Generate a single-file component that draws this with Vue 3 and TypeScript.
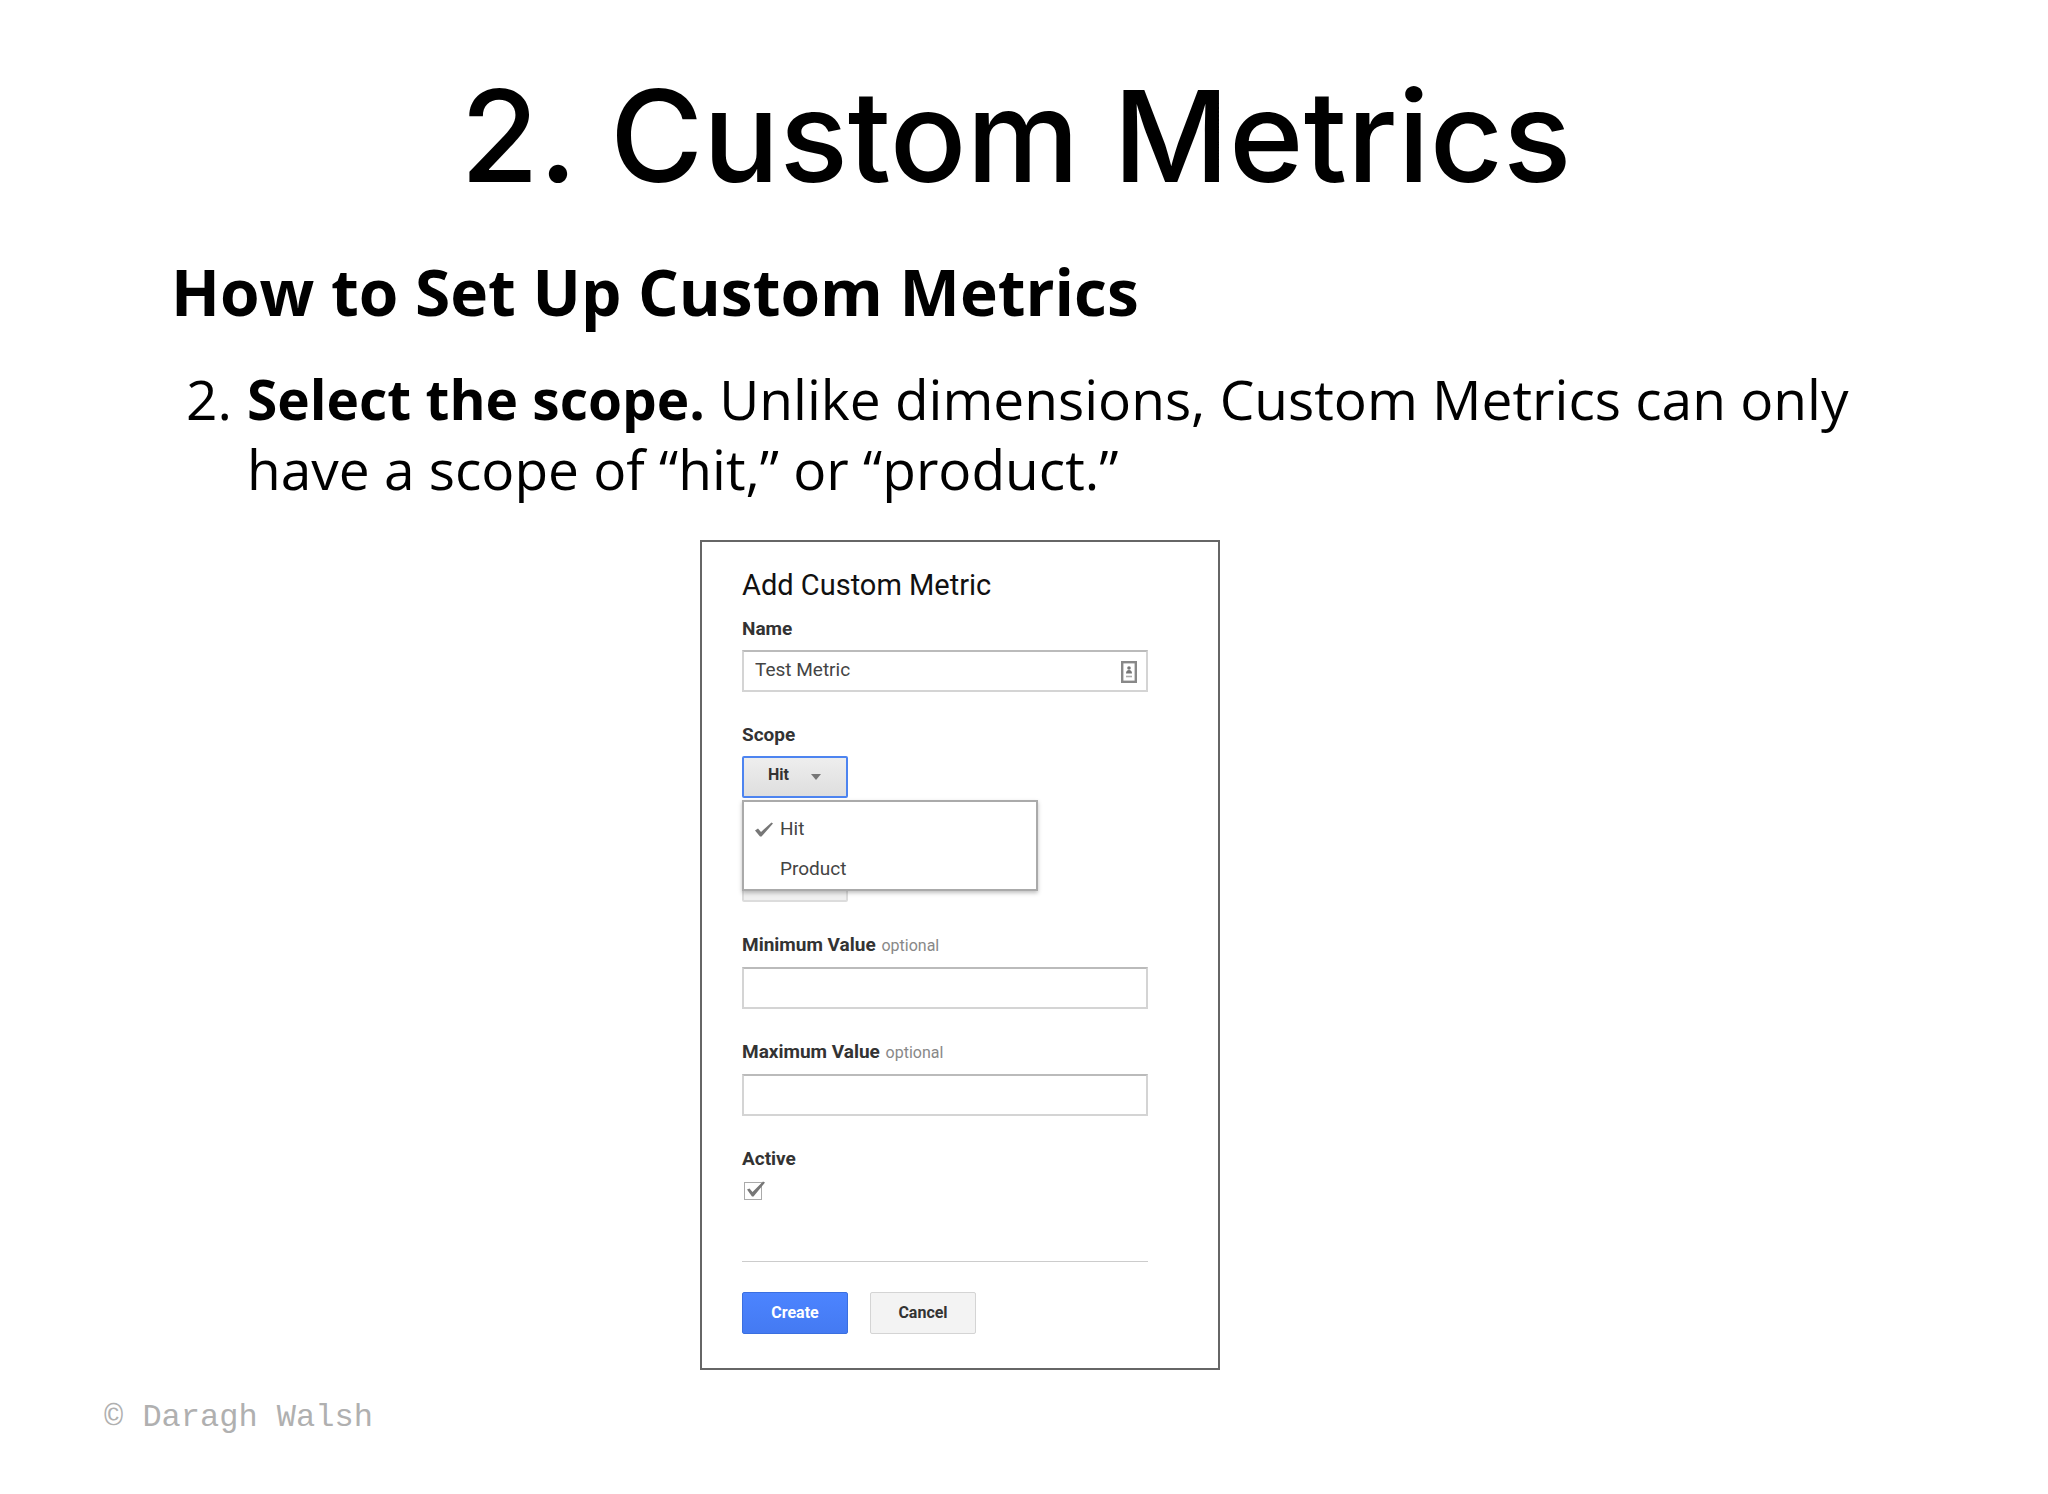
<script setup lang="ts">
import { ref } from 'vue'

const name = ref<string>('Test Metric')
const scopes: string[] = ['Hit', 'Product']
const scope = ref<string>('Hit')
const minimum = ref<string>('')
const maximum = ref<string>('')
const active = ref<boolean>(true)
</script>

<template>
  <div class="slide">
    <h1>2. Custom Metrics</h1>
    <main>
      <h2>How to Set Up Custom Metrics</h2>
      <ol start="2" class="steps">
        <li>
          <span class="number">2.</span>
          <p><strong>Select the scope.</strong> Unlike dimensions, Custom Metrics can only have a scope of “hit,” or “product.”</p>
        </li>
      </ol>
      <div class="figure">
        <form class="panel" @submit.prevent>
          <h3>Add Custom Metric</h3>

          <div class="field">
            <label for="name">Name</label>
            <div class="control">
              <input id="name" v-model="name" type="text" />
              <svg class="contact" viewBox="0 0 16 22" width="16" height="22" aria-hidden="true">
                <rect x="1.2" y="1.2" width="13.6" height="19.6" fill="#fff" stroke="#888" stroke-width="2.4" />
                <circle cx="8" cy="7" r="1.8" fill="#777" />
                <path d="M5 12.5 Q5 9 8 9 Q11 9 11 12.5 Z" fill="#777" />
                <path d="M5 15.5 H11" stroke="#aaa" stroke-width="1.6" />
              </svg>
            </div>
          </div>

          <div class="field">
            <label for="scope">Scope</label>
            <div class="control dropdown">
              <select id="scope" v-model="scope" class="focused">
                <option v-for="s in scopes" :key="s" :value="s">{{ s }}</option>
              </select>
              <svg class="arrow" viewBox="0 0 10 6" width="10" height="6" aria-hidden="true">
                <path d="M0 0 H10 L5 6 Z" fill="#777" />
              </svg>
              <ul class="menu">
                <li v-for="s in scopes" :key="s" @click="scope = s">
                  <span class="mark">
                    <svg v-if="s === scope" viewBox="0 0 18 15" width="18" height="15" aria-hidden="true">
                      <path d="M0 8.5 L3 6.5 L6 10 L16.5 0.5 L18 1.5 L6.5 14.5 H5 Z" fill="#777" />
                    </svg>
                  </span>
                  {{ s }}
                </li>
              </ul>
            </div>
          </div>

          <div class="field unlabelled">
            <select aria-label="Formatting Type"></select>
          </div>

          <div class="field">
            <label for="minimum">Minimum Value <small>optional</small></label>
            <input id="minimum" v-model="minimum" type="text" />
          </div>

          <div class="field">
            <label for="maximum">Maximum Value <small>optional</small></label>
            <input id="maximum" v-model="maximum" type="text" />
          </div>

          <div class="field">
            <label for="active">Active</label>
            <div class="control tick">
              <input id="active" v-model="active" type="checkbox" />
              <svg v-if="active" viewBox="0 0 20 20" width="20" height="20" aria-hidden="true">
                <path d="M2 8.5 L4.5 7.5 L7.5 11 L18 0.5 L20 1.5 L8.5 15.5 H7 Z" fill="#777" />
              </svg>
            </div>
          </div>

          <div class="actions">
            <button type="submit" class="primary">Create</button>
            <button type="button">Cancel</button>
          </div>
        </form>
      </div>
    </main>
    <footer>© Daragh Walsh</footer>
  </div>
</template>

<style>
body {
  margin: 0;
  background: #fff;
}
</style>

<style scoped>
* {
  box-sizing: border-box;
}

.slide {
  padding: 64px 0 40px;
  color: #000;
  font-family: 'Open Sans', sans-serif;
}

h1 {
  margin: 0 0 0 -16px;
  font: 500 127px/144px Inter, sans-serif;
  text-align: center;
}

main {
  padding: 40px 172px 0 171px;
}

h2 {
  margin: 0;
  font-size: 64px;
  line-height: 88px;
}

.steps {
  margin: 28px 0 0;
  padding: 0 0 0 15px;
  list-style: none;
}

.steps li {
  display: flex;
  font-size: 55px;
  line-height: 70px;
}

.number {
  flex: 0 0 61px;
}

.steps p {
  margin: 0;
}

.figure {
  display: flex;
  justify-content: center;
  margin-top: 36px;
  padding-right: 127px;
}

.panel {
  width: 520px;
  padding: 23px 70px 34px 40px;
  border: 2px solid #666;
  background: #fff;
  color: #333;
  font-family: Roboto, sans-serif;
  font-size: 18px;
}

h3 {
  margin: 0 0 12px;
  color: #111;
  font-size: 29px;
  font-weight: 400;
  line-height: 40px;
}

.field {
  display: flex;
  flex-direction: column;
  align-items: flex-start;
  margin-bottom: 31px;
}

.unlabelled {
  padding-top: 31px;
}

label {
  margin-bottom: 9px;
  font-size: 19px;
  font-weight: 700;
  line-height: 24px;
}

small {
  margin-left: 1px;
  color: #888;
  font-size: 16px;
  font-weight: 400;
}

.control {
  position: relative;
}

.field > .control:not(.dropdown):not(.tick) {
  width: 100%;
}

input[type='text'] {
  display: block;
  width: 100%;
  height: 42px;
  padding: 0 40px 4px 11px;
  border: 2px solid #d4d4d4;
  border-top-color: #bbb;
  background: #fff;
  color: #444;
  font: 400 19px/24px Roboto, sans-serif;
}

.contact {
  position: absolute;
  top: 11px;
  right: 11px;
}

select {
  display: block;
  width: 106px;
  height: 42px;
  padding: 0 0 4px 24px;
  appearance: none;
  border: 2px solid #dcdcdc;
  border-radius: 2px;
  background: #f0f0f0;
  color: #333;
  font: 700 16px/20px Roboto, sans-serif;
}

select.focused {
  border-color: #4d84f0;
  background: linear-gradient(#eee, #dedede);
}

.arrow {
  position: absolute;
  top: 18px;
  right: 27px;
}

.menu {
  position: absolute;
  top: 44px;
  left: 0;
  z-index: 1;
  width: 296px;
  margin: 0;
  padding: 7px 0 0;
  border: 2px solid #aaa;
  background: #fff;
  box-shadow: 0 2px 4px rgba(0, 0, 0, 0.25);
  color: #444;
  font-size: 19px;
  line-height: 40px;
  list-style: none;
}

.menu li {
  display: flex;
  align-items: center;
}

.mark {
  display: flex;
  width: 36px;
  padding-left: 11px;
}

.tick {
  padding: 2px;
}

.tick input {
  display: block;
  width: 18px;
  height: 18px;
  margin: 0;
  appearance: none;
  border: 1px solid #aaa;
  background: #fff;
}

.tick svg {
  position: absolute;
  top: 1px;
  left: 3px;
}

.actions {
  display: flex;
  gap: 22px;
  margin-top: 59px;
  padding-top: 30px;
  border-top: 1px solid #ccc;
}

button {
  width: 106px;
  height: 42px;
  padding: 0;
  border: 1px solid #d4d4d4;
  border-radius: 2px;
  background: #f3f3f3;
  color: #333;
  font: 700 16px/20px Roboto, sans-serif;
}

button.primary {
  border-color: #3a6fe0;
  background: linear-gradient(#4c84ff, #447af2);
  color: #fff;
}

footer {
  margin-top: 28px;
  padding-left: 104px;
  color: #b0b0b0;
  font: 32px/40px 'Liberation Mono', monospace;
}
</style>
